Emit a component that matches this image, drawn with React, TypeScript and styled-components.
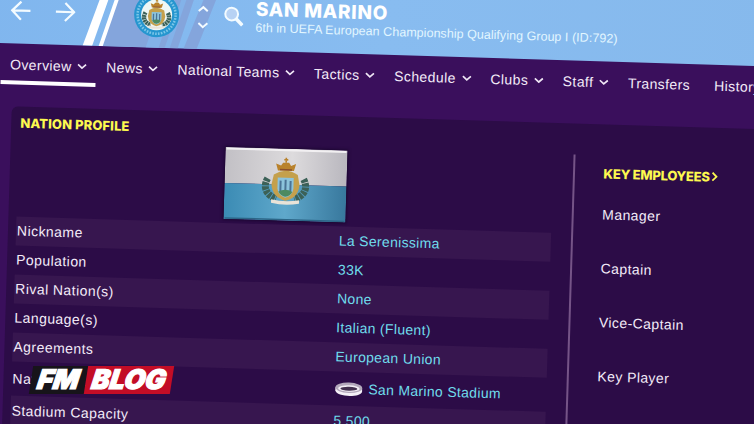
import styled, { createGlobalStyle } from "styled-components";

const GlobalStyle = createGlobalStyle`
  * {
    box-sizing: border-box;
  }

  body {
    margin: 0;
    overflow: hidden;
    background: #3a0f5c;
    font-family: "Liberation Sans", sans-serif;
  }
`;

const Stage = styled.div`
  position: relative;
  width: 754px;
  height: 424px;
  overflow: hidden;
  background: #3a0f5c;
`;

// the whole screen is tilted slightly clockwise
const Screen = styled.div`
  width: 790px;
  margin-top: -40px;
  transform: rotate(1.74deg);
  transform-origin: 0 40px;
  color: #f3ebf8;
`;

const Header = styled.header`
  position: relative;
  display: flex;
  height: 83px;
  margin-left: -20px;
  padding: 40px 0 0 20px;
  background: linear-gradient(90deg, #80b6ee, #88bcf0 50%, #86b9ec);
`;

const Stripes = styled.svg`
  position: absolute;
  left: 90px;
  top: 0;
`;

const Arrows = styled.div`
  position: relative;
  display: flex;
  gap: 25px;
  margin-left: 11px;
  width: 123px;
`;

const Badge = styled.svg`
  position: relative;
  flex: none;
  margin-top: -13.5px;
`;

const HeaderTools = styled.div`
  position: relative;
  display: flex;
  gap: 15px;
  margin: -1px 0 0 17.5px;
  width: 58.5px;
`;

const Heading = styled.div`
  position: relative;
  margin-top: -10.5px;
`;

const Country = styled.h1`
  margin: 0;
  font-family: Inter, sans-serif;
  font-size: 19px;
  line-height: 23px;
  font-weight: 800;
  letter-spacing: 0.7px;
  color: #fff;
  white-space: nowrap;
`;

const Standing = styled.p`
  margin: 0;
  font-size: 12.5px;
  line-height: 15px;
  letter-spacing: 0.04px;
  color: #e2f6ff;
  white-space: nowrap;
`;

const Nav = styled.nav`
  display: flex;
  gap: 19px;
  height: 63px;
  padding-left: 12px;
  font-size: 14px;
`;

const NavItem = styled.a<{ $active?: boolean }>`
  position: relative;
  display: flex;
  align-items: center;
  gap: 5.5px;
  height: 40.5px;
  padding-top: 1px;
  letter-spacing: 0.42px;
  white-space: nowrap;

  &:last-child {
    margin-left: 5px;
  }

  &::after {
    content: "";
    display: ${(props) => (props.$active ? "block" : "none")};
    position: absolute;
    left: -9px;
    right: -9px;
    bottom: 0;
    height: 3.5px;
    background: #fff;
  }
`;

const Panel = styled.main`
  display: flex;
  height: 380px;
  margin-left: 15px;
  border-radius: 6px 0 0 0;
  background: #2c0c47;
`;

const Profile = styled.section`
  width: 543px;
  padding: 7.5px 0 0 8px;
`;

const PanelTitle = styled.h2<{ $tight?: boolean }>`
  display: flex;
  align-items: center;
  margin: 0;
  padding-left: ${(props) => (props.$tight ? 0 : 1)}px;
  font-family: Inter, sans-serif;
  font-size: 13px;
  line-height: 16px;
  font-weight: 800;
  letter-spacing: ${(props) => (props.$tight ? -0.25 : 0.1)}px;
  color: #fdf94f;
  white-space: nowrap;
`;

const FlagFrame = styled.div`
  width: 122px;
  height: 72px;
  margin: 10.5px 0 3.5px 206.5px;
  box-shadow: 0 0 3px 1px #1b0630;
`;

const Row = styled.div<{ $shaded: boolean; $tall?: boolean }>`
  display: grid;
  grid-template-columns: 322px 1fr;
  align-items: center;
  height: ${(props) => (props.$tall ? 34.5 : 29)}px;
  padding: 0.5px 0 0 1px;
  background: ${(props) => (props.$shaded ? "#37164f" : "transparent")};
  font-size: 14px;
  letter-spacing: 0.45px;
  white-space: nowrap;
`;

const Value = styled.span`
  display: flex;
  align-items: center;
  gap: 6px;
  color: #70dcec;
  letter-spacing: 0.32px;
`;

const Employees = styled.aside`
  margin: 31px 0 0 19.5px;
  padding: 9.5px 0 0 29px;
  border-left: 2px solid #755487;
`;

const Role = styled.div`
  height: 54px;
  font-size: 14px;
  line-height: 18px;
  letter-spacing: 0.42px;

  &:first-of-type {
    margin-top: 24.5px;
  }
`;

const Watermark = styled.div`
  position: absolute;
  left: 31px;
  top: 366px;
  display: flex;
  width: 141px;
  height: 28px;
  transform: skewX(-9deg);
  font-family: Inter, sans-serif;
  font-size: 27px;
  line-height: 28px;
  font-weight: 900;
  font-style: italic;
  color: #fff;
`;

const MarkPart = styled.span<{ $bg: string; $width: number }>`
  width: ${(props) => props.$width}px;
  background: ${(props) => props.$bg};
  text-align: center;
  -webkit-text-stroke: 1.2px #fff;
`;

const navItems = [
  { label: "Overview", menu: true },
  { label: "News", menu: true },
  { label: "National Teams", menu: true },
  { label: "Tactics", menu: true },
  { label: "Schedule", menu: true },
  { label: "Clubs", menu: true },
  { label: "Staff", menu: true },
  { label: "Transfers", menu: false },
  { label: "History", menu: false },
];

const facts = [
  { label: "Nickname", value: "La Serenissima" },
  { label: "Population", value: "33K" },
  { label: "Rival Nation(s)", value: "None" },
  { label: "Language(s)", value: "Italian (Fluent)" },
  { label: "Agreements", value: "European Union" },
  { label: "National Stadium", value: "San Marino Stadium", stadium: true },
  { label: "Stadium Capacity", value: "5,500" },
];

const roles = ["Manager", "Captain", "Vice-Captain", "Key Player"];

function Chevron() {
  return (
    <svg width="10" height="6" viewBox="0 0 10 6" fill="none">
      <path d="M1 1l4 3.6L9 1" stroke="#efe6f5" strokeWidth="1.7" />
    </svg>
  );
}

function Arrow({ flip }: { flip?: boolean }) {
  return (
    <svg width="20" height="20" viewBox="0 0 20 20" fill="none">
      <path
        d={flip ? "M0 10h18M9.5 1l9 9-9 9" : "M20 10H2M10.5 1l-9 9 9 9"}
        stroke="#f3fbff"
        strokeWidth="2.2"
      />
    </svg>
  );
}

function Crest() {
  return (
    <g>
      <path
        d="M-18-5c-5 9-1 17 9 20M18-5c5 9 1 17-9 20"
        stroke="#3c6157"
        strokeWidth="7"
        strokeDasharray="3.4 0.8"
        fill="none"
      />
      <path d="M-12-9Q0-17 12-9l2 10q-1 13-14 16-13-3-14-16z" fill="#c4a04c" />
      <path d="M-8-6H8V5q-1 7-8 9-7-2-8-9z" fill="#8cc3dc" />
      <path d="M-5-3V8M0-4v13M5-3V8" stroke="#4a7396" strokeWidth="2" />
      <path d="M-7 8q7-4 14 0-2 4-7 5-5-1-7-5z" fill="#4d8a61" />
      <path d="M-8-13l-2-7 5 2 2-3h6l2 3 5-2-2 7z" fill="#b9822c" />
      <path d="M-6-14H6" stroke="#8a4f2c" strokeWidth="1.5" />
      <path d="M0-26v5M-2-24h4" stroke="#b9822c" strokeWidth="1.6" />
      <path d="M-14 16q14 3 28 0v3.5q-14 3-28 0z" fill="#e9e3d8" />
    </g>
  );
}

function Flag() {
  return (
    <FlagFrame>
      <svg width="122" height="72" viewBox="0 0 122 72">
        <defs>
          <linearGradient id="cloth" x1="0" x2="1">
            <stop offset="0" stopColor="#c2c0c5" />
            <stop offset="0.55" stopColor="#dddbdd" />
            <stop offset="1" stopColor="#b9b7be" />
          </linearGradient>
          <linearGradient id="sea" x1="0" x2="1">
            <stop offset="0" stopColor="#3b8bb4" />
            <stop offset="0.5" stopColor="#5fa8cb" />
            <stop offset="1" stopColor="#38789d" />
          </linearGradient>
        </defs>
        <rect width="122" height="36" fill="url(#cloth)" />
        <rect y="36" width="122" height="36" fill="url(#sea)" />
        <path d="M1 1.5h120" stroke="#f2f0f2" strokeWidth="2" />
        <path d="M1 71h120" stroke="#2c6586" strokeWidth="1.5" />
        <g transform="translate(61 35)">
          <Crest />
        </g>
      </svg>
    </FlagFrame>
  );
}

function Stadium() {
  return (
    <svg width="28" height="15" viewBox="-1 0 28 15">
      <path d="M0 6v3c1 7 26 7 27 0V6z" fill="#f4f0f6" />
      <ellipse cx="13.5" cy="6" rx="13.5" ry="5.2" fill="#b3a8bb" />
      <ellipse cx="13.5" cy="6.8" rx="10.8" ry="3.2" fill="#f4f0f6" />
      <ellipse cx="13.5" cy="7" rx="8.5" ry="1.9" fill="#43304e" />
    </svg>
  );
}

export default function App() {
  return (
    <Stage>
      <GlobalStyle />
      <Screen>
        <Header>
          <Stripes width="170" height="83" viewBox="-20 -40 170 83">
            <path d="M38-40H114L89 43H14z" fill="#84a5dc" />
            <path d="M83-40h12L70 43H57z" fill="#83b2e9" />
            <path d="M102-40h5L81 43h-5z" fill="#83b2e9" />
            <path d="M126-40h12L108 43H95z" fill="#84a5dc" />
            <path d="M22-40h8L3.5 43H-6z" fill="#fff" />
            <path d="M36-40h4L14 43h-4z" fill="#fff" />
          </Stripes>
          <Arrows>
            <Arrow />
            <Arrow flip />
          </Arrows>
          <Badge width="46" height="46" viewBox="-23 -23 46 46">
            <circle r="22.5" fill="#2696cf" />
            <circle
              r="19"
              fill="none"
              stroke="#7cc6e8"
              strokeWidth="2.5"
              strokeDasharray="1.6 1.3"
            />
            <circle r="15.5" fill="#eef7f5" />
            <g transform="translate(0 1) scale(.62)">
              <Crest />
            </g>
          </Badge>
          <HeaderTools>
            <svg width="11" height="26" viewBox="0 0 11 26" fill="none">
              <path
                d="M1 6l4.5-4L10 6M1 18l4.5 4L10 18"
                stroke="#f3fbff"
                strokeWidth="2"
              />
            </svg>
            <svg width="20" height="22" viewBox="0 0 20 22" fill="none">
              <circle
                cx="8"
                cy="8"
                r="6.4"
                fill="#b7d2f4"
                stroke="#f3fbff"
                strokeWidth="2"
              />
              <path d="M12.5 12.5l6.5 6.5" stroke="#f3fbff" strokeWidth="3.6" />
            </svg>
          </HeaderTools>
          <Heading>
            <Country>SAN MARINO</Country>
            <Standing>
              6th in UEFA European Championship Qualifying Group I (ID:792)
            </Standing>
          </Heading>
        </Header>
        <Nav>
          {navItems.map((item, i) => (
            <NavItem key={item.label} $active={i === 0}>
              {item.label}
              {item.menu && <Chevron />}
            </NavItem>
          ))}
        </Nav>
        <Panel>
          <Profile>
            <PanelTitle>NATION PROFILE</PanelTitle>
            <Flag />
            {facts.map((fact, i) => (
              <Row key={fact.label} $shaded={i % 2 === 0} $tall={fact.stadium}>
                <span>{fact.label}</span>
                <Value>
                  {fact.stadium && <Stadium />}
                  {fact.value}
                </Value>
              </Row>
            ))}
          </Profile>
          <Employees>
            <PanelTitle $tight>
              KEY EMPLOYEES
              <svg width="9" height="10" viewBox="0 0 9 10" fill="none">
                <path d="M2.5 1l4 4-4 4" stroke="#fdf94f" strokeWidth="1.8" />
              </svg>
            </PanelTitle>
            {roles.map((role) => (
              <Role key={role}>{role}</Role>
            ))}
          </Employees>
        </Panel>
      </Screen>
      <Watermark>
        <MarkPart $bg="#17141a" $width={55}>
          FM
        </MarkPart>
        <MarkPart $bg="#c30d26" $width={86}>
          BLOG
        </MarkPart>
      </Watermark>
    </Stage>
  );
}
